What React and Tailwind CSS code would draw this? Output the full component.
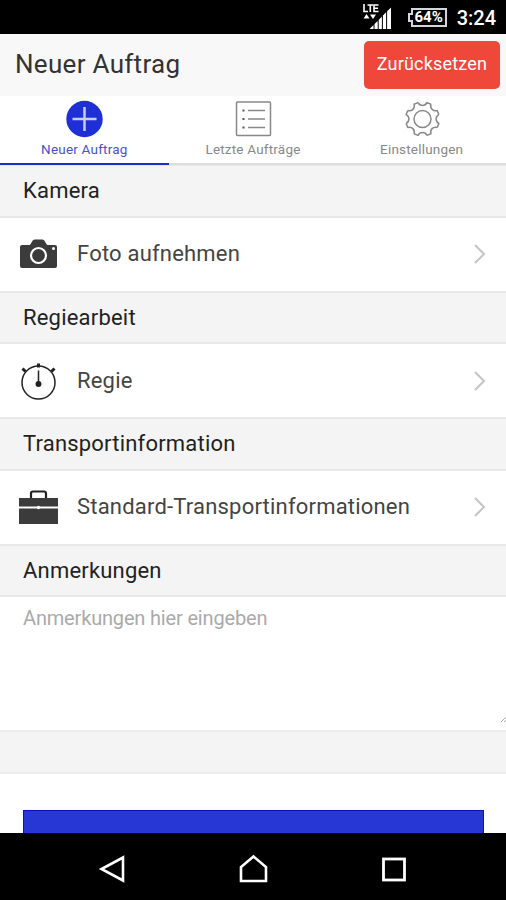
const sections = [
  { title: "Kamera", label: "Foto aufnehmen", Icon: CameraIcon },
  { title: "Regiearbeit", label: "Regie", Icon: StopwatchIcon },
  { title: "Transportinformation", label: "Standard-Transportinformationen", Icon: BriefcaseIcon },
];

function StatusBar() {
  return (
    <div className="flex h-[34px] shrink-0 items-center justify-end bg-black pr-[10px] text-white">
      <svg width="30" height="30" viewBox="0 0 30 30" className="mr-[19px] mb-[2px]" fill="#fff">
        <path d="M2 3v7.500h4M5.500 4h5.500M8.300 4v7M16.500 4H12v6.500h4.500M12 7.200h4" fill="none" stroke="#fff" strokeWidth="1.600" />
        <path d="M1.500 17.500l3-4.500 3 4.500zM8 13.500h6L11 18z" />
        <path d="M7.500 28l4-4v4zM12.500 28v-5l3.200-3v8zM16.700 28v-9l3.200-3.500V28zM20.900 28V14.500l3.200-3.200V28zM25.100 28V10.300l3.900-3.800V28z" />
      </svg>
      <div className="relative mr-[10px] flex h-[19px] w-[36px] items-center justify-center border-2 border-gray-300">
        <span className="absolute -left-[5px] h-[9px] w-[5px] border-2 border-r-0 border-gray-300 bg-black" />
        <span className="text-[15px] leading-none font-bold">64%</span>
      </div>
      <span className="pt-px text-[20px] leading-none font-medium">3:24</span>
    </div>
  );
}

function Header() {
  return (
    <div className="flex h-[62px] shrink-0 items-center justify-between bg-[#f8f8f8] pr-[6px] pl-[15px]">
      <h1 className="pb-[2px] text-[26px] leading-none tracking-[0.3px] text-[#333]">Neuer Auftrag</h1>
      <button className="h-[48px] w-[136px] rounded-[5px] bg-[#ef473a] pb-[4px] text-[18px] tracking-[0.2px] text-white">
        Zurücksetzen
      </button>
    </div>
  );
}

function Tabs() {
  return (
    <div className="grid h-[69px] shrink-0 grid-cols-3 bg-white text-[13.5px] leading-none tracking-[0.2px] text-[#888]">
      <div className="flex flex-col items-center border-b-2 border-[#1c2ec4] pt-[4px] text-[#4a50d2]">
        <svg width="38" height="38" viewBox="0 0 38 38">
          <circle cx="19.500" cy="19" r="18.200" fill="#1f2fd6" />
          <path d="M19.500 7v24M7.500 19h24" stroke="#c9ccf8" strokeWidth="2.500" />
        </svg>
        <span className="mt-[5px]">Neuer Auftrag</span>
      </div>
      <div className="flex flex-col items-center border-b-2 border-[#dedede] pt-[4px]">
        <svg width="38" height="38" viewBox="0 0 38 38" fill="none" stroke="#888" strokeWidth="1.500">
          <rect x="2.500" y="2" width="34" height="33.500" rx="1" />
          <path d="M14 10.500h17M14 19h17M14 27.500h17" />
          <path d="M8.500 10.500h2M8.500 19h2M8.500 27.500h2" stroke="#555" strokeWidth="2" />
        </svg>
        <span className="mt-[5px]">Letzte Aufträge</span>
      </div>
      <div className="flex flex-col items-center border-b-2 border-[#dedede] pt-[4px]">
        <GearIcon />
        <span className="mt-[5px]">Einstellungen</span>
      </div>
    </div>
  );
}

// eight teeth, with a notch at the top
function GearIcon() {
  return (
    <svg width="38" height="38" viewBox="-19 -19 38 38" fill="none" stroke="#888" strokeWidth="1.500" strokeLinejoin="round">
      <circle cx="0.500" cy="0" r="8.500" />
      <g transform="translate(0.500 0)">
        {[0, 45, 90, 135, 180, 225, 270, 315].map((angle) => (
          <path
            key={angle}
            transform={`rotate(${angle})`}
            d="M-4.400 -16.400Q-3 -13.600 0 -13.600Q3 -13.600 4.400 -16.400L8.490 -14.700"
          />
        ))}
      </g>
    </svg>
  );
}

function CameraIcon() {
  return (
    <svg width="40" height="40" viewBox="0 0 40 40">
      <path d="M4 11h7.500q1-.5 2-2.500 1.300-3 3-3h8q1.700 0 3 3 1 2 2 2.500H37q2 0 2 2v19q0 2-2 2H4q-2 0-2-2V13q0-2 2-2z" fill="#3b3b3b" />
      <circle cx="20.500" cy="21.500" r="7.500" fill="#3b3b3b" stroke="#fff" strokeWidth="2.200" />
      <circle cx="35.500" cy="14.500" r="1.500" fill="#fff" />
    </svg>
  );
}

function StopwatchIcon() {
  return (
    <svg width="40" height="40" viewBox="0 0 40 40" fill="none" stroke="#222" strokeWidth="1.500">
      <circle cx="20.500" cy="21.500" r="16.500" />
      <path d="M20.500 9.500v14" />
      <circle cx="20.500" cy="23" r="2.200" fill="#222" />
      <path d="M20.500 2.500v4" strokeWidth="3" />
      <path d="M7.500 10.500L4.500 7.500M33.500 10.500l3-3" strokeWidth="3" />
    </svg>
  );
}

function BriefcaseIcon() {
  return (
    <svg width="40" height="40" viewBox="0 0 40 40">
      <path d="M13 11V6.500a2 2 0 0 1 2-2h11a2 2 0 0 1 2 2V11" fill="none" stroke="#222" strokeWidth="2.200" />
      <path d="M1 11h39v8.500H1zM1 21.500h39V37H1z" fill="#3b3b3b" />
      <circle cx="20.500" cy="20.500" r="1.700" fill="#fff" />
    </svg>
  );
}

function SectionTitle({ children }) {
  return (
    <div className="h-[53.6px] border-y-2 border-[#e8e8e8] bg-[#f4f4f4] pl-[23px] text-[22px] leading-[50px] tracking-[0.2px] text-[#222]">
      {children}
    </div>
  );
}

function App() {
  return (
    <div className="flex h-[900px] w-full flex-col overflow-hidden bg-white font-['Roboto',sans-serif]">
      <StatusBar />
      <Header />
      <Tabs />
      <div className="min-h-0 flex-1 overflow-hidden">
        <div className="-mt-px">
          {sections.map(({ title, label, Icon }) => (
            <div key={title}>
              <SectionTitle>{title}</SectionTitle>
              <div className="flex h-[73px] items-center pr-[19px] pl-[18px] text-[#444]">
                <span className="flex w-[59px]">
                  <Icon />
                </span>
                <span className="flex-1 text-[22px] leading-none tracking-[0.2px]">{label}</span>
                <svg width="14" height="22" viewBox="0 0 14 22" fill="none" stroke="#c4c4c4" strokeWidth="2">
                  <path d="M2 2l9 9-9 9" />
                </svg>
              </div>
            </div>
          ))}
          <SectionTitle>Anmerkungen</SectionTitle>
        </div>
        <div className="relative h-[133px] pt-[10px] pl-[23px] text-[20px] leading-[22px] tracking-[-0.17px] text-[#aaa]">
          Anmerkungen hier eingeben
          <svg width="6" height="6" viewBox="0 0 6 6" className="absolute right-0 bottom-[8px]" stroke="#aaa">
            <path d="M1 6l5-5M4 6l2-2" />
          </svg>
        </div>
        <div className="h-[44px] border-y-2 border-[#ececec] bg-[#f4f4f4]" />
        <div className="mr-[22px] ml-[23px] mt-[36px] h-[60px] border border-[#0c12c0] bg-[#2637d6]" />
      </div>
      <div className="grid h-[67px] shrink-0 grid-cols-3 items-center justify-items-center bg-black px-[42px] pt-[4px]">
        <svg width="30" height="30" viewBox="0 0 30 30" fill="none" stroke="#fff" strokeWidth="2.600">
          <path d="M26 3.500v23L4.500 15z" />
        </svg>
        <svg width="32" height="32" viewBox="0 0 32 32" fill="none" stroke="#fff" strokeWidth="2.600">
          <path d="M4 28V14L16.500 3.500 29 14v14z" />
        </svg>
        <svg width="30" height="30" viewBox="0 0 30 30" fill="none" stroke="#fff" strokeWidth="2.800">
          <rect x="4.500" y="5" width="21" height="21" />
        </svg>
      </div>
    </div>
  );
}

export default App;
